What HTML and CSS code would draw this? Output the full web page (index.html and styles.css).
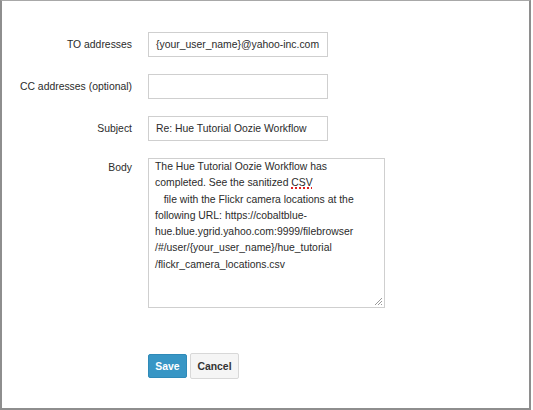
FILE: index.html
```html
<!DOCTYPE html>
<html>
<head>
<meta charset="utf-8">
<link rel="stylesheet" href="styles.css">
</head>
<body>
<div class="frame">
  <form class="form">
    <div class="row">
      <label class="label">TO addresses</label>
      <div class="field">{your_user_name}@yahoo-inc.com</div>
    </div>
    <div class="row">
      <label class="label">CC addresses (optional)</label>
      <div class="field"></div>
    </div>
    <div class="row">
      <label class="label">Subject</label>
      <div class="field">Re: Hue Tutorial Oozie Workflow</div>
    </div>
    <div class="row row-top">
      <label class="label label-top">Body</label>
      <div class="area"><div class="area-text">The Hue Tutorial Oozie Workflow has
completed. See the sanitized <span class="spell">CSV</span>
   file with the Flickr camera locations at the
following URL: https://cobaltblue-
hue.blue.ygrid.yahoo.com:9999/filebrowser
/#/user/{your_user_name}/hue_tutorial
/flickr_camera_locations.csv</div><svg class="grip" width="9" height="9" viewBox="0 0 9 9"><path d="M8 1 L1 8 M8 4 L4 8 M8 7 L7 8" stroke="#9a9a9a" stroke-width="1"/></svg></div>
    </div>
    <div class="actions">
      <button type="button" class="btn btn-primary">Save</button>
      <button type="button" class="btn btn-default">Cancel</button>
    </div>
  </form>
</div>
</body>
</html>
```
FILE: styles.css
```css
html, body {
  margin: 0;
  padding: 0;
  background: #ffffff;
}
.frame {
  width: 531px;
  height: 410px;
  box-sizing: border-box;
  border-left: 2px solid #8e8e8e;
  border-right: 2px solid #8e8e8e;
  border-bottom: 2px solid #8e8e8e;
  border-top: 1px solid #a8a8a8;
  font-family: "Liberation Sans", Arial, sans-serif;
  font-size: 10.4px;
  color: #2b2b2b;
  padding-top: 31px;
}
.form {
  display: flex;
  flex-direction: column;
  gap: 17px;
}
.row {
  display: grid;
  grid-template-columns: 130px auto;
  column-gap: 16px;
  align-items: center;
}
.row-top {
  align-items: start;
}
.label {
  text-align: right;
  color: #2b2b2b;
}
.label-top {
  padding-top: 4px;
}
.field {
  width: 180px;
  height: 25px;
  box-sizing: border-box;
  border: 1px solid #cfcfcf;
  padding: 0 7px;
  line-height: 23px;
  color: #2b2b2b;
  background: #fff;
}
.area {
  position: relative;
  width: 237px;
  height: 150px;
  box-sizing: border-box;
  border: 1px solid #cfcfcf;
  padding: 0 6px;
  background: #fff;
}
.area-text {
  white-space: pre;
  line-height: 16.3px;
  color: #2b2b2b;
}
.spell {
  text-decoration: underline dotted #e02020;
  text-decoration-thickness: 1.5px;
  text-underline-offset: 1px;
}
.grip {
  position: absolute;
  right: 1px;
  bottom: 1px;
}
.actions {
  display: flex;
  align-items: center;
  gap: 3px;
  padding-left: 146px;
  margin-top: 28px;
}
.btn {
  font-family: "Liberation Sans", Arial, sans-serif;
  font-size: 10.4px;
  font-weight: bold;
  margin: 0;
  box-sizing: border-box;
  cursor: pointer;
}
.btn-primary {
  width: 39px;
  height: 24px;
  background: #3896c5;
  color: #ffffff;
  border: 1px solid #2f8ab8;
  border-radius: 2px;
}
.btn-default {
  width: 49px;
  height: 26px;
  background: #f5f5f5;
  color: #333333;
  border: 1px solid #d8d8d8;
  border-radius: 2px;
}
```
